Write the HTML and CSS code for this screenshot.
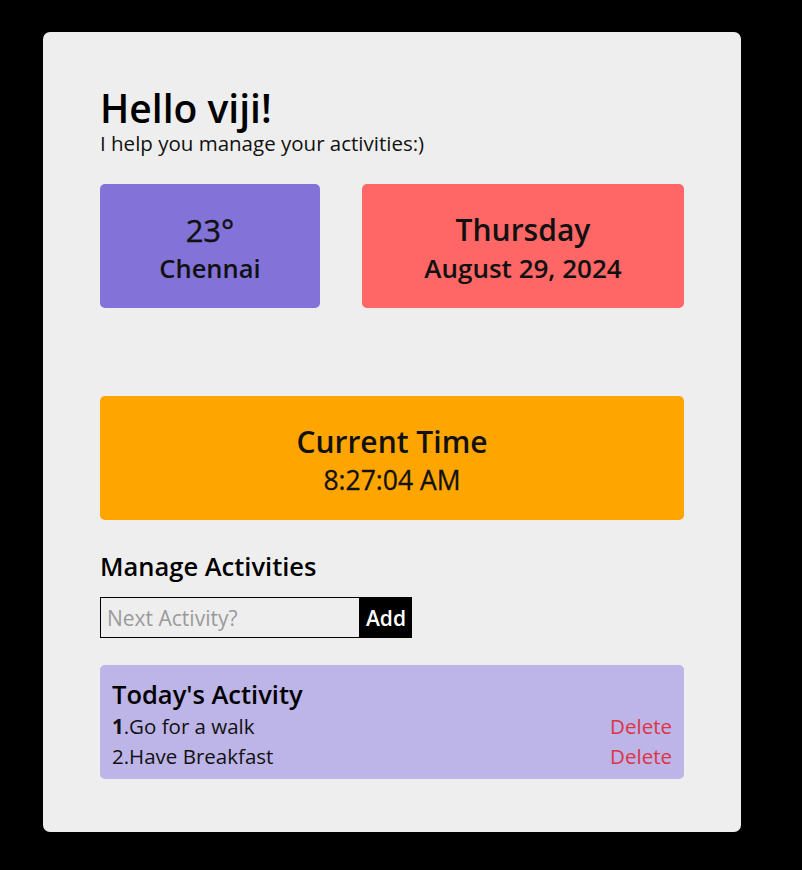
FILE: index.html
```html
<!DOCTYPE html>
<html>
<head>
<meta charset="utf-8">
<link rel="stylesheet" href="styles.css">
</head>
<body>
<div class="card">
  <h1 class="title">Hello viji!</h1>
  <p class="subtitle">I help you manage your activities:)</p>
  <div class="top-row">
    <div class="box weather">
      <div class="big">23°</div>
      <div class="small">Chennai</div>
    </div>
    <div class="box date">
      <div class="big">Thursday</div>
      <div class="small">August 29, 2024</div>
    </div>
  </div>
  <div class="box time">
    <div class="big">Current Time</div>
    <div class="small">8:27:04 AM</div>
  </div>
  <h2 class="section">Manage Activities</h2>
  <div class="add-row">
    <input class="activity-input" type="text" placeholder="Next Activity?">
    <button class="add-btn">Add</button>
  </div>
  <div class="list">
    <h3 class="list-title">Today's Activity</h3>
    <div class="item"><span><b>1</b>.Go for a walk</span><span class="delete">Delete</span></div>
    <div class="item"><span>2.Have Breakfast</span><span class="delete">Delete</span></div>
  </div>
</div>
</body>
</html>
```
FILE: styles.css
```css
html, body {
  margin: 0;
  padding: 0;
  background: #000;
  font-family: "Open Sans", "Noto Sans", sans-serif;
  color: #000;
}
body {
  padding: 32px 0 0 43px;
}
.card {
  box-sizing: border-box;
  width: 698px;
  height: 800px;
  background: #eeeeee;
  border-radius: 7px;
  padding: 54px 57px 0 57px;
}
.title {
  margin: 0;
  font-size: 39px;
  font-weight: 600;
  line-height: 44px;
}
.subtitle {
  margin: 0;
  font-size: 20.5px;
  line-height: 26px;
  color: #111;
}
.top-row {
  display: flex;
  gap: 42px;
  margin-top: 28px;
}
.box {
  box-sizing: border-box;
  height: 124px;
  border-radius: 5px;
  display: flex;
  flex-direction: column;
  align-items: center;
  justify-content: center;
  color: #111;
  padding-top: 5px;
}
.weather {
  width: 220px;
  background: #8373d9;
}
.date {
  flex: 1;
  background: #ff6666;
}
.big {
  font-size: 30px;
  font-weight: 600;
  line-height: 38px;
}
.weather .big {
  font-size: 31px;
  font-weight: 500;
  -webkit-text-stroke: 0.4px #111;
}
.small {
  font-size: 25.5px;
  font-weight: 600;
  line-height: 38px;
}
.date .small {
  font-size: 26px;
}
.time {
  margin-top: 88px;
  background: #ffa500;
  padding-top: 6px;
}
.time .small {
  font-size: 26.5px;
  font-weight: 500;
  -webkit-text-stroke: 0.3px #111;
}
.section {
  margin: 26px 0 0 0;
  font-size: 25.5px;
  font-weight: 600;
  line-height: 40px;
}
.add-row {
  display: flex;
  margin-top: 11px;
  height: 41px;
}
.activity-input {
  box-sizing: border-box;
  width: 260px;
  height: 41px;
  border: 1px solid #000;
  background: transparent;
  padding: 0 6px;
  font-family: inherit;
  font-size: 21px;
  outline: none;
}
.activity-input::placeholder {
  color: #9a9a9a;
}
.add-btn {
  width: 52px;
  height: 41px;
  border: none;
  background: #000;
  color: #fff;
  font-family: inherit;
  font-size: 21px;
  font-weight: 600;
  padding: 0;
}
.list {
  margin-top: 27px;
  background: #bdb4e8;
  border-radius: 5px;
  padding: 12px 12px 10px 12px;
  height: 114px;
  box-sizing: border-box;
}
.list-title {
  margin: 0;
  font-size: 25.5px;
  font-weight: 600;
  line-height: 34px;
}
.item {
  display: flex;
  justify-content: space-between;
  font-size: 20.5px;
  line-height: 30px;
  color: #111;
}
.item b {
  font-weight: 700;
}
.delete {
  color: #dc3545;
}
```
